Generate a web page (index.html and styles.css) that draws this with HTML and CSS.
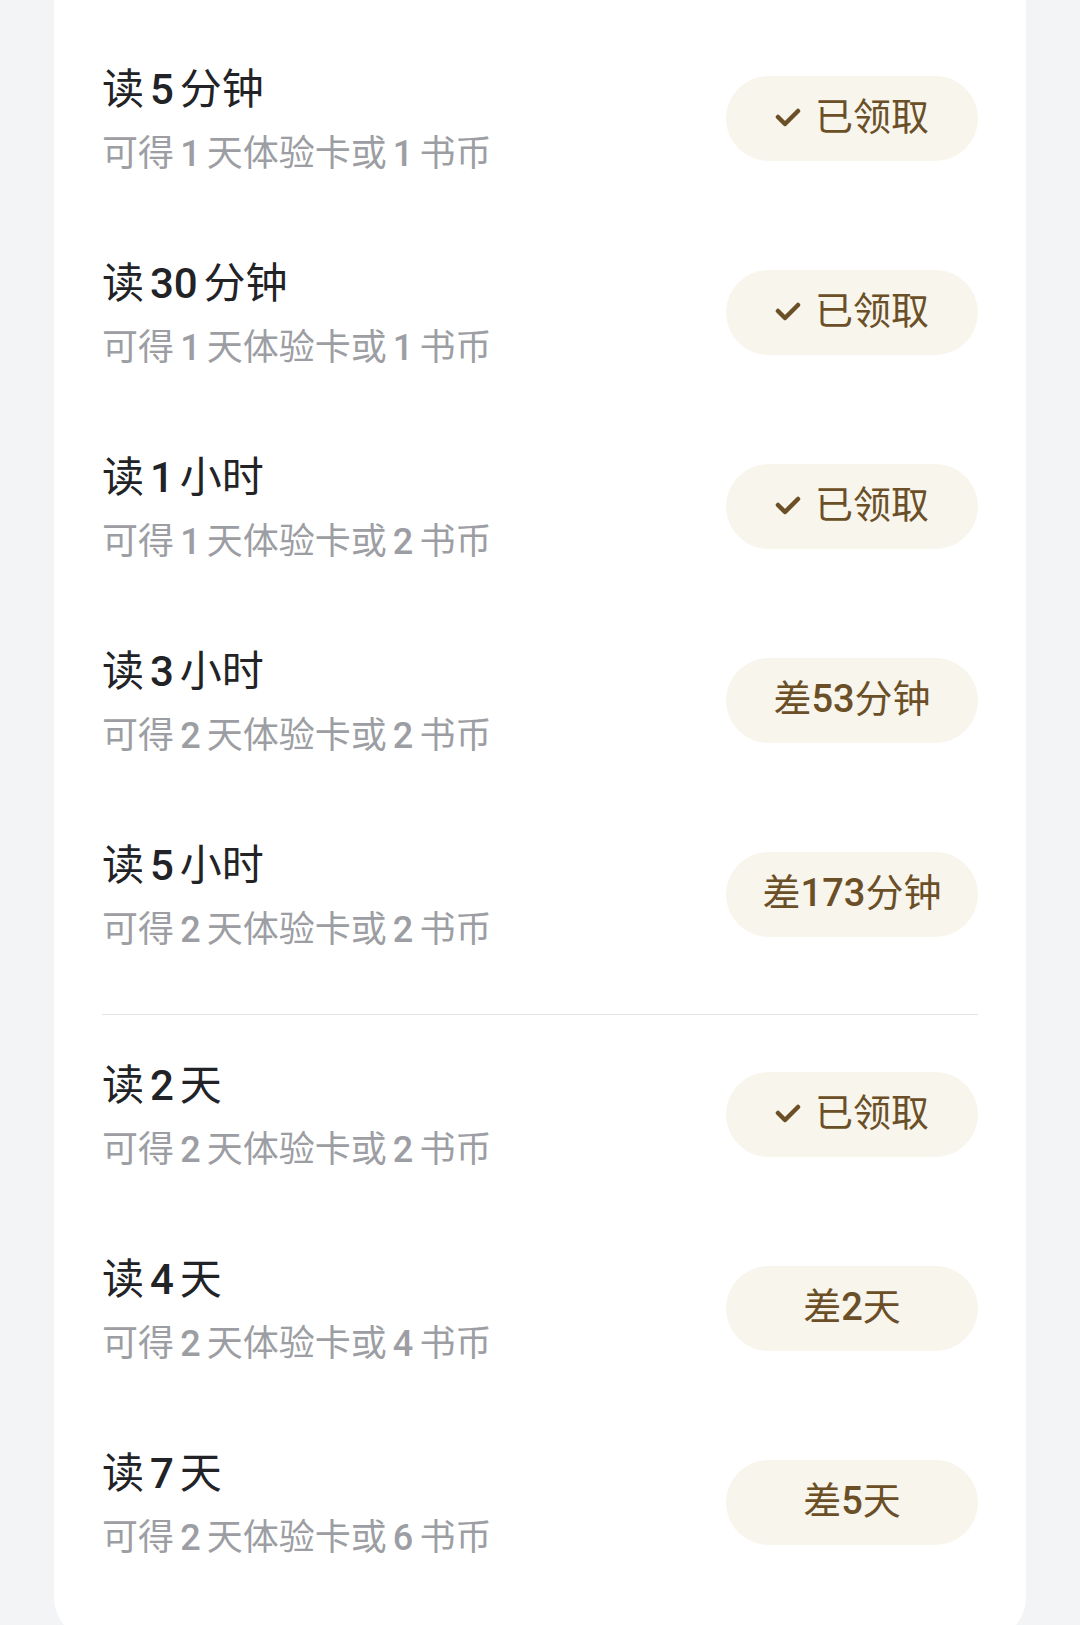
FILE: index.html
```html
<!DOCTYPE html>
<html lang="zh-CN">
<head>
<meta charset="utf-8">
<title>阅读奖励</title>
<link rel="stylesheet" href="styles.css">
</head>
<body>
<div class="card">
  <div class="section first">
    <div class="row">
      <div class="info">
        <div class="title">读<span class="n">5</span>分钟</div>
        <div class="sub">可得<span class="n">1</span>天体验卡或<span class="n">1</span>书币</div>
      </div>
      <div class="btn"><svg class="check" viewBox="0 0 26 20"><polyline points="3,9 10,16 23,3"/></svg><span>已领取</span></div>
    </div>
    <div class="row">
      <div class="info">
        <div class="title">读<span class="n">30</span>分钟</div>
        <div class="sub">可得<span class="n">1</span>天体验卡或<span class="n">1</span>书币</div>
      </div>
      <div class="btn"><svg class="check" viewBox="0 0 26 20"><polyline points="3,9 10,16 23,3"/></svg><span>已领取</span></div>
    </div>
    <div class="row">
      <div class="info">
        <div class="title">读<span class="n">1</span>小时</div>
        <div class="sub">可得<span class="n">1</span>天体验卡或<span class="n">2</span>书币</div>
      </div>
      <div class="btn"><svg class="check" viewBox="0 0 26 20"><polyline points="3,9 10,16 23,3"/></svg><span>已领取</span></div>
    </div>
    <div class="row">
      <div class="info">
        <div class="title">读<span class="n">3</span>小时</div>
        <div class="sub">可得<span class="n">2</span>天体验卡或<span class="n">2</span>书币</div>
      </div>
      <div class="btn"><span>差<span class="bn">53</span>分钟</span></div>
    </div>
    <div class="row">
      <div class="info">
        <div class="title">读<span class="n">5</span>小时</div>
        <div class="sub">可得<span class="n">2</span>天体验卡或<span class="n">2</span>书币</div>
      </div>
      <div class="btn"><span>差<span class="bn">173</span>分钟</span></div>
    </div>
  </div>
  <div class="divider"></div>
  <div class="section">
    <div class="row">
      <div class="info">
        <div class="title">读<span class="n">2</span>天</div>
        <div class="sub">可得<span class="n">2</span>天体验卡或<span class="n">2</span>书币</div>
      </div>
      <div class="btn"><svg class="check" viewBox="0 0 26 20"><polyline points="3,9 10,16 23,3"/></svg><span>已领取</span></div>
    </div>
    <div class="row">
      <div class="info">
        <div class="title">读<span class="n">4</span>天</div>
        <div class="sub">可得<span class="n">2</span>天体验卡或<span class="n">4</span>书币</div>
      </div>
      <div class="btn"><span>差<span class="bn">2</span>天</span></div>
    </div>
    <div class="row">
      <div class="info">
        <div class="title">读<span class="n">7</span>天</div>
        <div class="sub">可得<span class="n">2</span>天体验卡或<span class="n">6</span>书币</div>
      </div>
      <div class="btn"><span>差<span class="bn">5</span>天</span></div>
    </div>
  </div>
</div>
</body>
</html>
```

FILE: styles.css
```css
html, body {
  margin: 0;
  padding: 0;
}
body {
  background: #f3f4f6;
  font-family: Roboto, "Noto Sans CJK SC", "Noto Sans", sans-serif;
  padding: 0 54px;
  height: 1625px;
  overflow: hidden;
}
.card {
  background: #ffffff;
  border-radius: 0 0 44px 44px;
  padding: 21px 48px 42px;
}
.section.first {
  padding-bottom: 23px;
}
.divider {
  height: 1px;
  background: #e4e4e6;
  margin-bottom: 2px;
}
.row {
  height: 194px;
  display: flex;
  align-items: center;
  justify-content: space-between;
}
.info {
  display: flex;
  flex-direction: column;
  gap: 17px;
  margin-top: 5px;
}
.title {
  font-size: 42px;
  line-height: 50px;
  color: #222327;
  white-space: nowrap;
}
.title .n {
  font-weight: 500;
  margin: 0 0.14em;
}
.sub {
  font-size: 36px;
  line-height: 44px;
  color: #9c9ea3;
  white-space: nowrap;
}
.sub .n {
  font-weight: 500;
  margin: 0 0.17em;
}
.btn {
  width: 252px;
  height: 85px;
  border-radius: 43px;
  background: #f8f5ed;
  color: #6b4f27;
  font-size: 38px;
  line-height: 44px;
  display: flex;
  align-items: center;
  justify-content: center;
  gap: 14px;
  white-space: nowrap;
}
.btn span {
  position: relative;
  top: -1px;
}
.btn .bn {
  position: static;
  font-weight: 500;
}
.check {
  width: 26px;
  height: 20px;
  fill: none;
  stroke: #6b4f27;
  stroke-width: 4.5;
  stroke-linecap: round;
  stroke-linejoin: round;
}
```
